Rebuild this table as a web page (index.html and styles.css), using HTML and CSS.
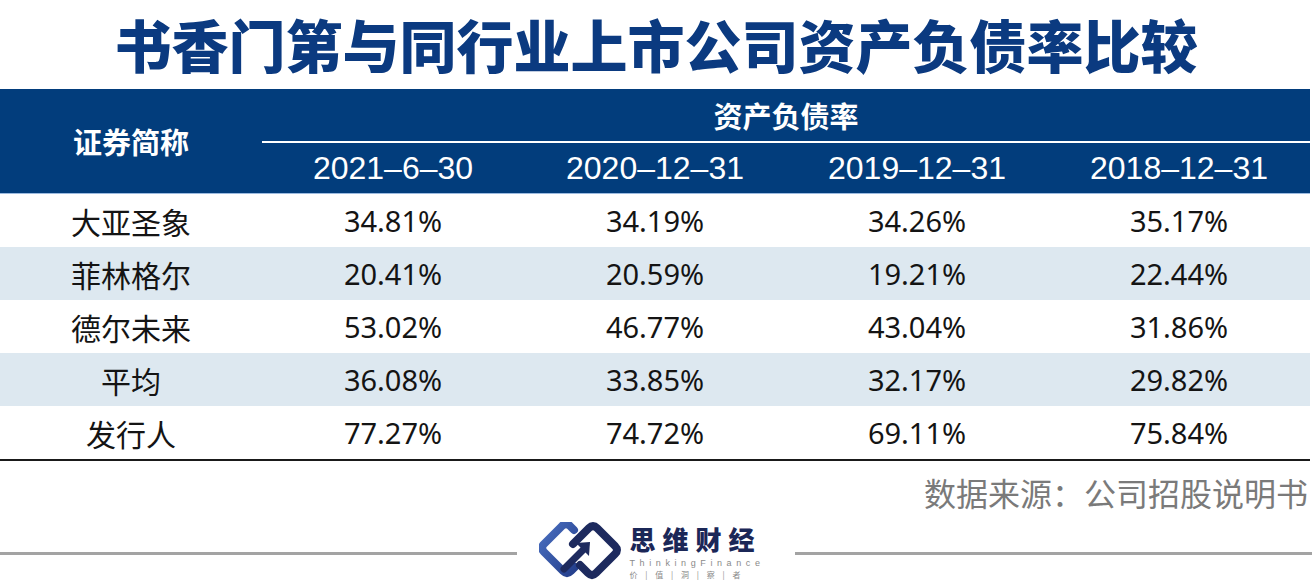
FILE: index.html
```html
<!DOCTYPE html>
<html lang="zh">
<head>
<meta charset="utf-8">
<title>书香门第与同行业上市公司资产负债率比较</title>
<link rel="stylesheet" href="styles.css">
</head>
<body>
<div class="page">
  <h1 class="title">书香门第与同行业上市公司资产负债率比较</h1>
  <table class="tbl">
    <thead>
      <tr>
        <th class="name-h" rowspan="2">证券简称</th>
        <th class="group-h" colspan="4">资产负债率</th>
      </tr>
      <tr>
        <th class="date-h">2021–6–30</th>
        <th class="date-h">2020–12–31</th>
        <th class="date-h">2019–12–31</th>
        <th class="date-h">2018–12–31</th>
      </tr>
    </thead>
    <tbody>
      <tr><td class="nm">大亚圣象</td><td>34.81%</td><td>34.19%</td><td>34.26%</td><td>35.17%</td></tr>
      <tr class="alt"><td class="nm">菲林格尔</td><td>20.41%</td><td>20.59%</td><td>19.21%</td><td>22.44%</td></tr>
      <tr><td class="nm">德尔未来</td><td>53.02%</td><td>46.77%</td><td>43.04%</td><td>31.86%</td></tr>
      <tr class="alt"><td class="nm">平均</td><td>36.08%</td><td>33.85%</td><td>32.17%</td><td>29.82%</td></tr>
      <tr class="last"><td class="nm">发行人</td><td>77.27%</td><td>74.72%</td><td>69.11%</td><td>75.84%</td></tr>
    </tbody>
  </table>
  <div class="source">数据来源：公司招股说明书</div>
  <div class="footer">
    <div class="rule"></div>
    <div class="logo">
      <svg class="logo-icon" width="82" height="58" viewBox="0 0 82 58">
        <defs>
          <linearGradient id="lg" x1="0" y1="0" x2="1" y2="1">
            <stop offset="0" stop-color="#4a6fc0"/>
            <stop offset="1" stop-color="#243f8c"/>
          </linearGradient>
        </defs>
        <path d="M35 8 L31 4 Q27 0 23 4 L5 22 Q1 26 5 30 L24 49 Q28 53 32 49 L36 45" fill="none" stroke="url(#lg)" stroke-width="8" stroke-linecap="round"/>
        <path d="M34 22 L50 6 Q54 2 58 6 L76 24 Q80 28 76 32 L57 51 Q53 55 49 51 L41 43" fill="none" stroke="#1d2a5e" stroke-width="8" stroke-linecap="round"/>
        <path d="M25 47 L45 27" fill="none" stroke="#1d2a5e" stroke-width="7" stroke-linecap="round"/>
        <path d="M37 21 L51 20 L50 34 Z" fill="#1d2a5e"/>
      </svg>
      <div class="logo-text">
        <div class="logo-cn">思维财经</div>
        <div class="logo-en">ThinkingFinance</div>
        <div class="logo-sub">价 | 值 | 洞 | 察 | 者</div>
      </div>
    </div>
    <div class="rule"></div>
  </div>
</div>
</body>
</html>
```
FILE: styles.css
```css
html, body {
  margin: 0;
  padding: 0;
  background: #ffffff;
}

.page {
  width: 1312px;
  height: 581px;
  overflow: hidden;
  font-family: "Noto Sans", "Noto Sans CJK SC", sans-serif;
}

.title {
  margin: 0;
  height: 89px;
  display: flex;
  align-items: center;
  justify-content: center;
  padding-bottom: 3px;
  box-sizing: border-box;
  font-family: "Noto Sans CJK SC", sans-serif;
  font-weight: 900;
  font-size: 57px;
  color: #0b3a80;
}

.tbl {
  width: 1310px;
  border-collapse: collapse;
  table-layout: fixed;
}

.tbl th {
  background: #023d7c;
  color: #ffffff;
  padding: 0;
  text-align: center;
}

.name-h {
  width: 262px;
  font-family: "Noto Sans CJK SC", sans-serif;
  font-weight: 700;
  font-size: 29px;
  border-bottom: 1px solid #9cbbe0;
}

.group-h {
  height: 52px;
  font-family: "Noto Sans CJK SC", sans-serif;
  font-weight: 700;
  font-size: 29px;
  line-height: 52px;
  padding-bottom: 4px;
}

.date-h {
  height: 50px;
  border-top: 2px solid #ffffff;
  border-bottom: 1px solid #9cbbe0;
  font-family: "Liberation Sans", Arial, sans-serif;
  font-weight: 400;
  font-size: 32px;
  line-height: 50px;
}

.tbl td {
  height: 53px;
  padding: 0;
  text-align: center;
  font-family: "Noto Sans", sans-serif;
  font-size: 29px;
  color: #141414;
}

.tbl td.nm {
  font-family: "Noto Sans CJK SC", sans-serif;
  font-size: 30px;
}

.tbl tr.alt td {
  background: #dde8f0;
}

.tbl tr.last td {
  border-bottom: 2px solid #1a1a1a;
}

.source {
  height: 58px;
  padding-top: 2px;
  box-sizing: border-box;
  text-align: right;
  padding-right: 4px;
  font-family: "Noto Sans CJK SC", sans-serif;
  font-size: 32px;
  color: #7a7a7a;
  line-height: 58px;
}

.footer {
  height: 63px;
  display: flex;
  align-items: center;
}

.rule {
  flex: 1;
  height: 3px;
  background: #a3a3a3;
  margin-top: 5px;
}

.logo {
  display: flex;
  align-items: center;
  gap: 8px;
  margin: 0 30px 0 22px;
}

.logo-icon {
  display: block;
}

.logo-text {
  display: flex;
  flex-direction: column;
  align-items: flex-start;
}

.logo-cn {
  font-family: "Noto Sans CJK SC", sans-serif;
  font-weight: 900;
  font-size: 26px;
  line-height: 38px;
  letter-spacing: 7px;
  color: #1b2757;
}

.logo-en {
  font-family: "Liberation Sans", sans-serif;
  font-size: 9px;
  line-height: 11px;
  letter-spacing: 4.6px;
  color: #8a8a8a;
}

.logo-sub {
  font-family: "Noto Sans CJK SC", sans-serif;
  font-size: 8px;
  line-height: 12px;
  letter-spacing: 3px;
  color: #8a8a8a;
}
```
